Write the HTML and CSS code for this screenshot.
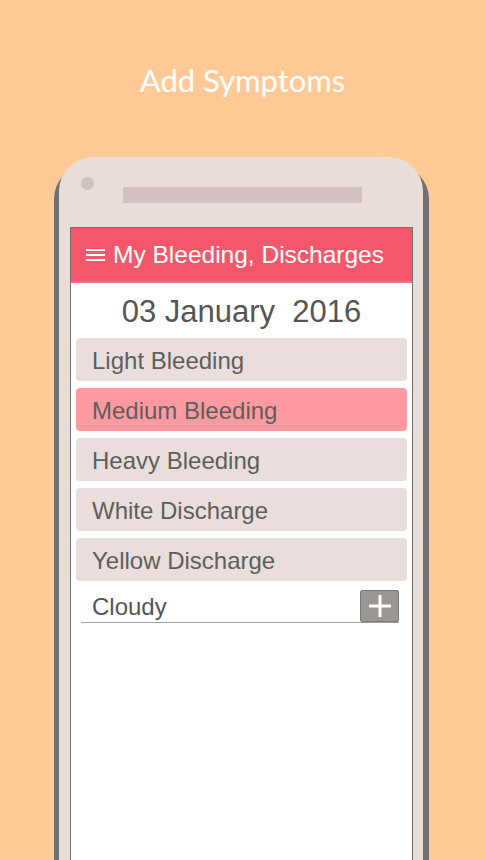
FILE: index.html
```html
<!DOCTYPE html>
<html lang="en">
<head>
    <meta charset="UTF-8">
    <meta name="viewport" content="width=device-width, initial-scale=1.0">
    <title>Add Symptoms</title>
    <link rel="stylesheet" href="styles.css">
</head>
<body>

    <h1 class="title">Add Symptoms</h1>

    <div class="phone">
        <div class="phone-top">
            <span class="camera"></span>
            <span class="speaker"></span>
        </div>

        <div class="screen">
            <div class="appbar">
                <span class="menu-icon">
                    <span></span><span></span><span></span>
                </span>
                <span class="appbar-title">My Bleeding, Discharges</span>
            </div>

            <p class="date">03 January &nbsp;2016</p>

            <ul class="symptoms">
                <li class="item">Light Bleeding</li>
                <li class="item selected">Medium Bleeding</li>
                <li class="item">Heavy Bleeding</li>
                <li class="item">White Discharge</li>
                <li class="item">Yellow Discharge</li>
            </ul>

            <div class="custom-row">
                <span class="custom-input">Cloudy</span>
                <button class="add-btn" aria-label="Add">
                    <svg width="24" height="24" viewBox="0 0 24 24">
                        <path d="M12 1v22M1 12h22" stroke="#fff" stroke-width="3" fill="none"/>
                    </svg>
                </button>
            </div>
        </div>
    </div>

</body>
</html>
```

FILE: styles.css
```css
body {
    font-family: "Liberation Sans", Arial, sans-serif;
    background-color: #ffca96;
    margin: 0;
    padding: 0;
    height: 860px;
    overflow: hidden;
}

.title {
    margin: 0;
    padding-top: 61px;
    height: 157px;
    text-align: center;
    font-family: Lato, "Open Sans", sans-serif;
    font-weight: normal;
    font-size: 31px;
    color: #fff;
    box-sizing: border-box;
}

.phone {
    margin-left: 59px;
    width: 364px;
    height: 703px;
    background-color: #e9ddd8;
    border-radius: 34px 34px 0 0;
    box-shadow: -5px 8px 0 #707070, 6px 8px 0 #707070;
}

.phone-top {
    height: 70px;
    display: flex;
    align-items: flex-start;
}

.camera {
    width: 13px;
    height: 13px;
    margin: 20px 0 0 22px;
    border-radius: 50%;
    background-color: #d2c1c0;
}

.speaker {
    width: 239px;
    height: 16px;
    margin: 30px 0 0 29px;
    background-color: #d2c1c0;
}

.screen {
    margin-left: 11px;
    width: 343px;
    height: 633px;
    background-color: #fff;
    border: 1px solid #707070;
    border-bottom: none;
    box-sizing: border-box;
}

.appbar {
    height: 55px;
    background-color: #f2576b;
    border-bottom: 2px solid #f47383;
    box-sizing: border-box;
    display: flex;
    align-items: center;
    padding: 0 0 0 15px;
    color: #fff;
}

.menu-icon {
    display: flex;
    flex-direction: column;
    gap: 3px;
    width: 19px;
    margin-right: 8px;
}

.menu-icon span {
    height: 2px;
    background-color: #fff;
}

.appbar-title {
    font-size: 24.5px;
}

.date {
    margin: 0;
    padding-top: 11px;
    height: 55px;
    box-sizing: border-box;
    text-align: center;
    font-size: 31px;
    color: #555;
}

.symptoms {
    list-style: none;
    margin: 0;
    padding: 0 5px;
    display: flex;
    flex-direction: column;
    gap: 7px;
}

.item {
    height: 43px;
    padding: 3px 0 0 16px;
    box-sizing: border-box;
    display: flex;
    align-items: center;
    background-color: #e9dedb;
    border-radius: 4px;
    font-size: 24px;
    color: #5e5e5e;
}

.item.selected {
    background-color: #fd9aa0;
}

.custom-row {
    margin: 9px 13px 0 10px;
    display: flex;
    align-items: flex-end;
    border-bottom: 1px solid #a0a0a0;
}

.custom-input {
    flex: 1;
    padding: 0 0 1px 11px;
    font-size: 24px;
    color: #555;
}

.add-btn {
    width: 39px;
    height: 32px;
    padding: 0;
    border: 1px solid #7a7672;
    border-radius: 2px;
    background-color: #9b9792;
    display: flex;
    align-items: center;
    justify-content: center;
    cursor: pointer;
}
```
